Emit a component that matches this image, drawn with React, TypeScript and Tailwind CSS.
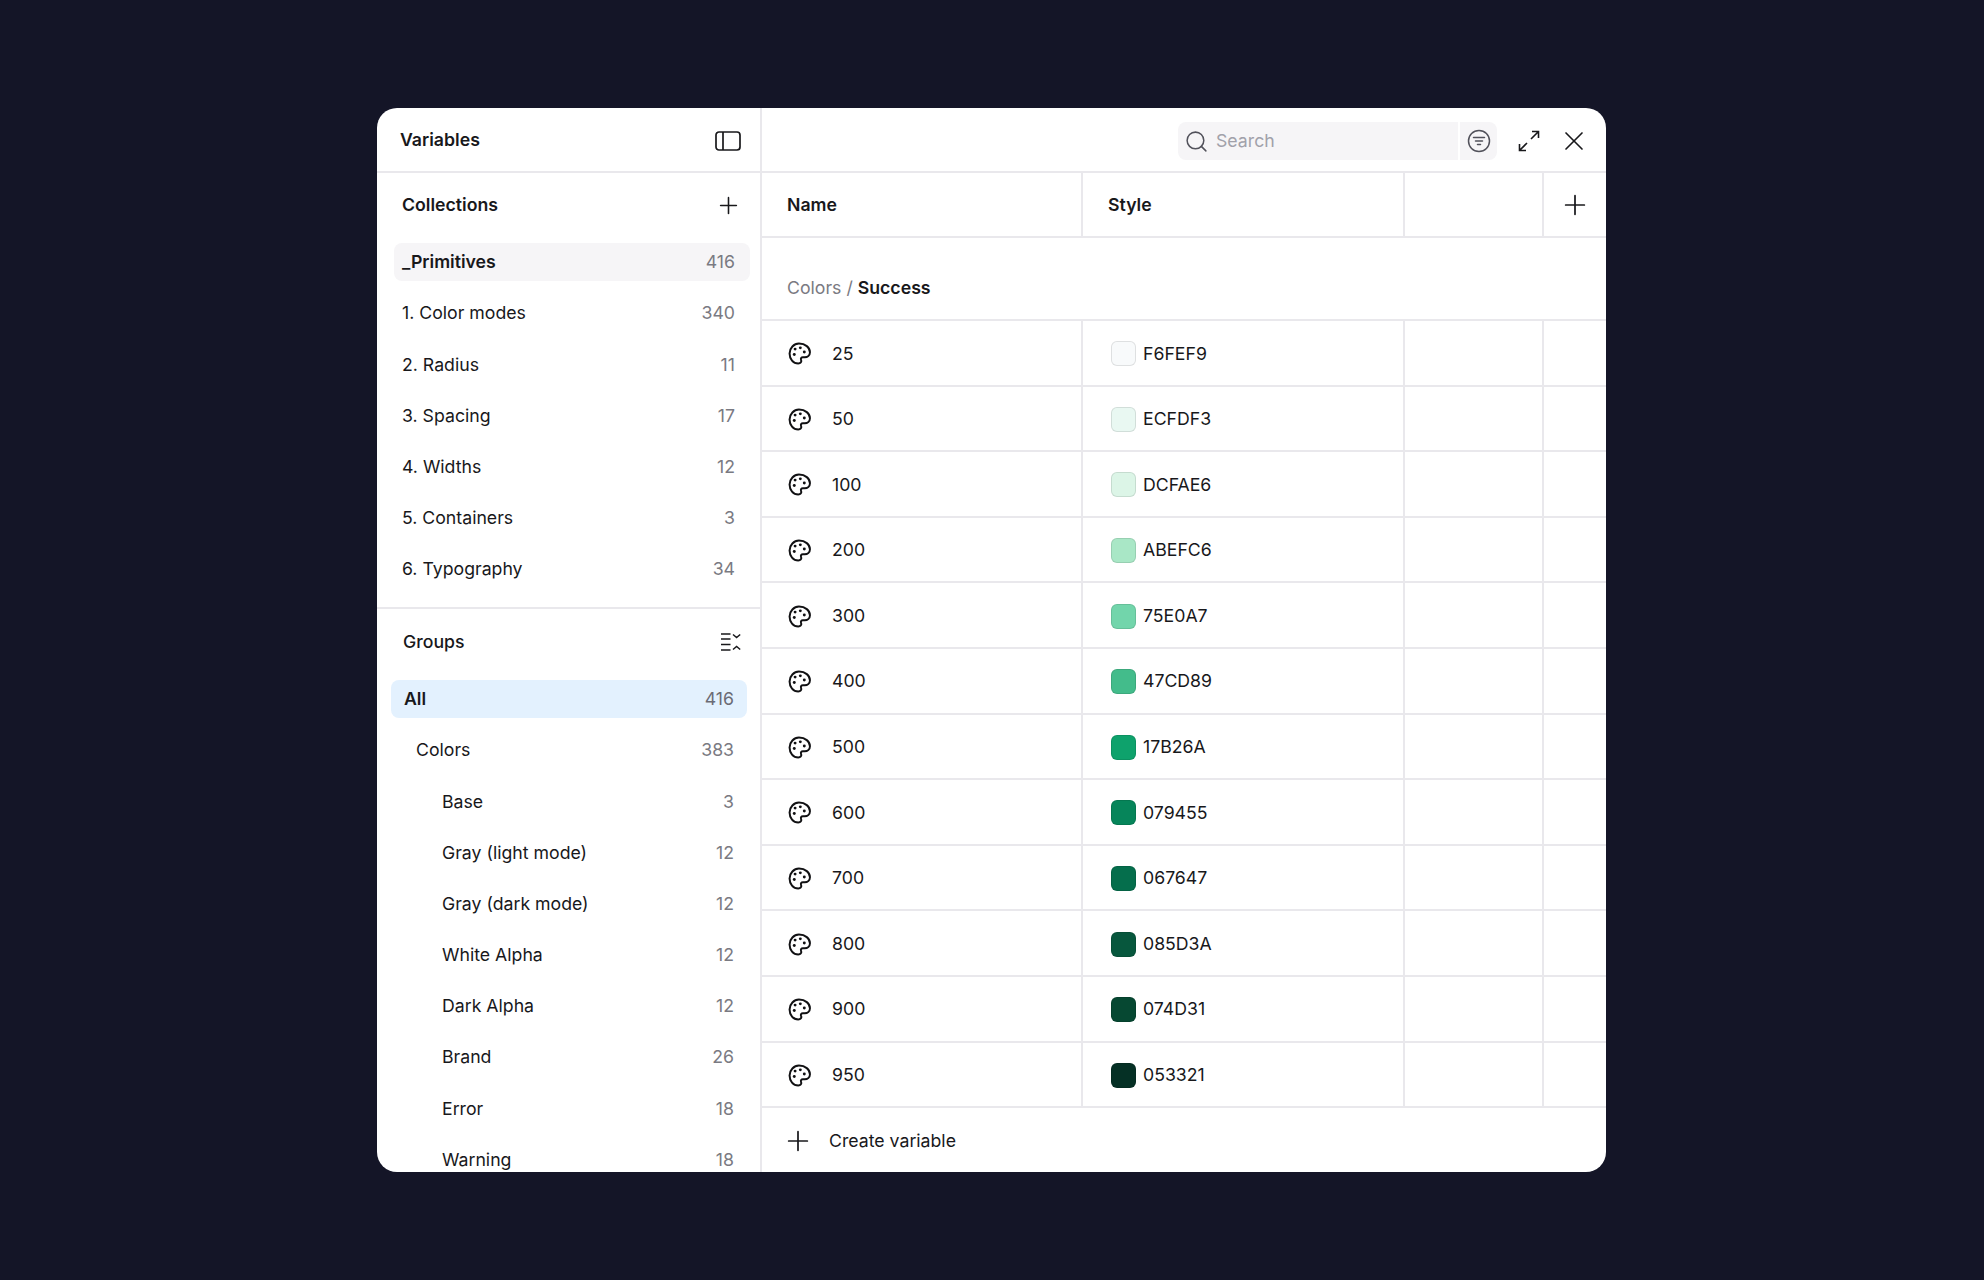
import { Plus, Search, X } from 'lucide-react';

const collections = [
  { name: '_Primitives', count: 416, active: true },
  { name: '1. Color modes', count: 340 },
  { name: '2. Radius', count: 11 },
  { name: '3. Spacing', count: 17 },
  { name: '4. Widths', count: 12 },
  { name: '5. Containers', count: 3 },
  { name: '6. Typography', count: 34 },
];

const groups = [
  { name: 'Base', count: 3 },
  { name: 'Gray (light mode)', count: 12 },
  { name: 'Gray (dark mode)', count: 12 },
  { name: 'White Alpha', count: 12 },
  { name: 'Dark Alpha', count: 12 },
  { name: 'Brand', count: 26 },
  { name: 'Error', count: 18 },
  { name: 'Warning', count: 18 },
];

// swatch colours as they show in the screenshot, a little muted against the hex labels
const shades = [
  { step: '25', hex: 'F6FEF9', color: '#f8fafb' },
  { step: '50', hex: 'ECFDF3', color: '#e9f8f2' },
  { step: '100', hex: 'DCFAE6', color: '#dcf5e7' },
  { step: '200', hex: 'ABEFC6', color: '#a9e7c6' },
  { step: '300', hex: '75E0A7', color: '#72d5ab' },
  { step: '400', hex: '47CD89', color: '#43bc8b' },
  { step: '500', hex: '17B26A', color: '#0ea26c' },
  { step: '600', hex: '079455', color: '#06855a' },
  { step: '700', hex: '067647', color: '#056e4c' },
  { step: '800', hex: '085D3A', color: '#07573d' },
  { step: '900', hex: '074D31', color: '#064832' },
  { step: '950', hex: '053321', color: '#053025' },
];

function PanelIcon() {
  return (
    <svg width="26" height="20" viewBox="0 0 26 20" fill="none" stroke="#18181b" strokeWidth="1.7">
      <rect x="1" y="1" width="24" height="18" rx="3" />
      <path d="M8 1v18" />
    </svg>
  );
}

function FilterCircleIcon() {
  return (
    <svg width="24" height="24" viewBox="0 0 24 24" fill="none" stroke="#52525b" strokeWidth="1.5" strokeLinecap="round">
      <circle cx="12" cy="12" r="10.5" />
      <path d="M6.5 8.5h11M8.5 12h7M10.5 15.5h3" />
    </svg>
  );
}

function ExpandIcon() {
  return (
    <svg width="22" height="22" viewBox="0 0 22 22" fill="none" stroke="#18181b" strokeWidth="1.6">
      <path d="M13 9l7.5-7.5M14 1.5h6.5V8M9 13l-7.5 7.5M1.5 14v6.5H8" />
    </svg>
  );
}

function CollapseListIcon() {
  return (
    <svg width="20" height="18" viewBox="0 0 20 18" fill="none" stroke="#18181b" strokeWidth="1.5">
      <path d="M0 1h9.5M0 6h9.5M0 11.5h9.5M0 17h9.5M12 1.5l3.6 3 3.6-3M12 16.5l3.6-3 3.6 3" />
    </svg>
  );
}

function PaletteIcon() {
  return (
    <svg width="23" height="23" viewBox="0 0 22 22" fill="none" stroke="#111113" strokeWidth="1.9" strokeLinejoin="round">
      <path d="M10.5 1.5C16.5 1.5 21 5.3 21 9.8C21 12.8 18.5 14.5 16 14.5L14.3 14.5C12.7 14.5 12 16 12.5 17.2C13.3 18.8 12 20.5 9.8 20.5C5 20.5 1.5 16.3 1.5 11C1.5 5.8 5.7 1.5 10.5 1.5Z" />
      <g fill="#111113" stroke="none">
        <circle cx="6" cy="12" r="1.4" />
        <circle cx="6.8" cy="6.8" r="1.4" />
        <circle cx="11.8" cy="5.6" r="1.4" />
        <circle cx="15.6" cy="9.6" r="1.4" />
      </g>
    </svg>
  );
}

export default function App() {
  return (
    <div className="flex h-screen w-full items-center justify-center bg-[#141527] font-['Inter',sans-serif] text-[17.7px] text-[#18181b]">
      <div className="mr-[1px] flex h-[1064px] w-[1229px] overflow-hidden rounded-[20px] bg-white">
        <aside className="flex w-[385px] shrink-0 flex-col border-r-[2px] border-[#e9e8ec]">
          <div className="flex h-[65px] shrink-0 items-center justify-between border-b-[2px] border-[#e9e8ec] pl-[23px] pr-[19px] pt-[2px]">
            <span className="font-semibold">Variables</span>
            <PanelIcon />
          </div>

          <div className="flex h-[64px] shrink-0 items-center justify-between pl-[25px] pr-[18.5px]">
            <span className="font-semibold">Collections</span>
            <Plus size={27} strokeWidth={1.4} />
          </div>
          <div className="flex flex-col gap-[13.2px] pl-[17px] pr-[10px] pt-[6px]">
            {collections.map((c) => (
              <div
                key={c.name}
                className={`flex h-[38px] items-center justify-between rounded-[8px] pl-[8px] pr-[15px] pt-[1px] ${c.active ? 'bg-[#f6f5f7] font-semibold' : ''}`}
              >
                <span>{c.name}</span>
                <span className="font-normal text-[#7a7a82]">{c.count}</span>
              </div>
            ))}
          </div>

          <div className="mt-[19px] flex h-[72.8px] shrink-0 items-center justify-between border-t-[2px] border-[#e9e8ec] pb-[5.2px] pl-[26px] pr-[19px]">
            <span className="font-medium">Groups</span>
            <CollapseListIcon />
          </div>
          <div className="flex flex-col gap-[13.2px] pl-[14px] pr-[13px]">
            <div className="flex h-[38px] shrink-0 items-center justify-between rounded-[8px] bg-[#e3f1fe] px-[13px] pt-[1px] font-semibold">
              <span>All</span>
              <span className="font-normal text-[#6b6b75]">416</span>
            </div>
            <div className="flex h-[38px] shrink-0 items-center justify-between pl-[25px] pr-[13px] pt-[1px]">
              <span>Colors</span>
              <span className="text-[#7a7a82]">383</span>
            </div>
            {groups.map((g) => (
              <div key={g.name} className="flex h-[38px] shrink-0 items-center justify-between pl-[51px] pr-[13px] pt-[1px]">
                <span>{g.name}</span>
                <span className="text-[#7a7a82]">{g.count}</span>
              </div>
            ))}
          </div>
        </aside>

        <main className="flex min-w-0 flex-1 flex-col">
          <div className="flex h-[65px] shrink-0 items-center justify-end border-b-[2px] border-[#e9e8ec] pr-[16px] pt-[3px]">
            <div className="flex h-[38px] w-[319px] overflow-hidden rounded-[8px] bg-[#f6f5f7]">
              <div className="flex w-[280px] items-center gap-[7px] pl-[6px]">
                <Search size={25} strokeWidth={1.45} className="text-[#52525b]" />
                <span className="text-[#a1a1aa]">Search</span>
              </div>
              <div className="flex flex-1 items-center justify-center border-l-[2px] border-white">
                <FilterCircleIcon />
              </div>
            </div>
            <div className="ml-[21px] flex items-center gap-[18px]">
              <ExpandIcon />
              <X size={32} strokeWidth={1.25} />
            </div>
          </div>

          <div className="flex h-[65px] shrink-0 border-b-[2px] border-[#e9e8ec] font-semibold">
            <div className="flex w-[321px] items-center border-r-[2px] border-[#e9e8ec] pl-[25px] pt-[2px]">Name</div>
            <div className="flex w-[322px] items-center border-r-[2px] border-[#e9e8ec] pl-[25px] pt-[2px]">Style</div>
            <div className="w-[139px] border-r-[2px] border-[#e9e8ec]" />
            <div className="flex flex-1 items-center justify-center">
              <Plus size={32} strokeWidth={1.3} />
            </div>
          </div>

          <div className="flex h-[83px] shrink-0 items-center border-b-[2px] border-[#e9e8ec] pl-[25px] pt-[20px]">
            <span className="text-[#7a7a82]">Colors /&nbsp;</span>
            <span className="font-semibold">Success</span>
          </div>

          {shades.map((s) => (
            <div key={s.step} className="flex h-[65.6px] shrink-0 border-b-[2px] border-[#e9e8ec]">
              <div className="flex w-[321px] items-center border-r-[2px] border-[#e9e8ec] pl-[26px] pt-[2px]">
                <PaletteIcon />
                <span className="ml-[21px]">{s.step}</span>
              </div>
              <div className="flex w-[322px] items-center border-r-[2px] border-[#e9e8ec] pl-[28px] pt-[2px]">
                <span
                  className="h-[25px] w-[25px] rounded-[6px] border border-black/10"
                  style={{ backgroundColor: s.color }}
                />
                <span className="ml-[7px]">{s.hex}</span>
              </div>
              <div className="w-[139px] border-r-[2px] border-[#e9e8ec]" />
              <div className="flex-1" />
            </div>
          ))}

          <div className="flex flex-1 items-center pl-[20px] pt-[2px]">
            <Plus size={32} strokeWidth={1.3} />
            <span className="ml-[15px]">Create variable</span>
          </div>
        </main>
      </div>
    </div>
  );
}
